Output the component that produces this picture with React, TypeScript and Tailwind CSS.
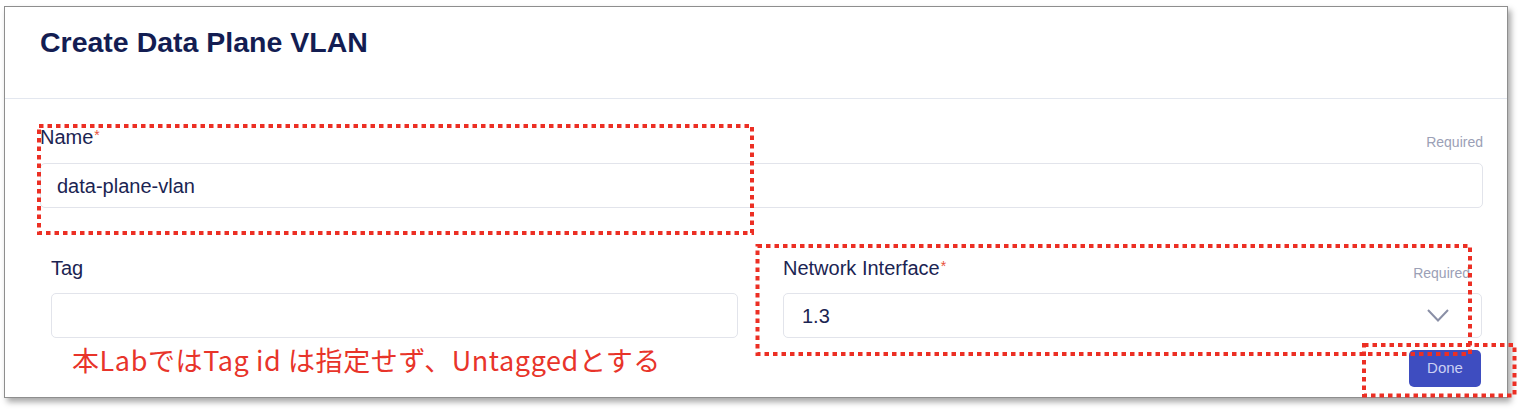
import React from "react";

const navy = "text-[#1b2452]";

function Required({ className = "" }: { className?: string }) {
  return (
    <span className={`text-[14px] leading-[14px] text-[#9ba0b6] ${className}`}>Required</span>
  );
}

export default function App() {
  return (
    <div
      className="relative w-[1522px] h-[412px] bg-white overflow-hidden"
      style={{ fontFamily: '"Liberation Sans", Arial, sans-serif' }}
    >
      <div className="ml-[4px] mt-[6px] w-[1504px] h-[392px] border border-[#8e8e8e] bg-white shadow-[3px_4px_6px_rgba(0,0,0,0.35)] flex flex-col">
        {/* header */}
        <div className="h-[92px] border-b border-[#e3e7ef] pl-[35px] pt-[21px]">
          <h1 className="text-[28.5px] leading-[28px] font-bold text-[#131d52]">Create Data Plane VLAN</h1>
        </div>

        {/* body */}
        <div className="flex flex-col pl-[35px] pr-[24px] pt-[28px]">
          <div className="flex justify-between h-[22px]">
            <label className={`text-[20px] leading-[20px] ${navy}`}>
              Name<span className="text-[#e8503a] text-[14px] align-top relative -top-[2px] ml-[1px]">*</span>
            </label>
            <Required className="mt-[8px]" />
          </div>
          <div className={`mt-[14px] h-[45px] rounded-[5px] border border-[#e2e4eb] pl-[16px] flex items-center text-[20px] ${navy}`}>
            data-plane-vlan
          </div>

          <div className="flex ml-[11px] mt-[50px] gap-[45px]">
            <div className="w-[687px] flex flex-col">
              <div className="h-[22px]">
                <label className={`text-[20px] leading-[20px] ${navy}`}>Tag</label>
              </div>
              <div className="mt-[13px] h-[45px] rounded-[5px] border border-[#e2e4eb]" />
            </div>
            <div className="w-[699px] flex flex-col">
              <div className="flex justify-between h-[22px]">
                <label className={`text-[20px] leading-[20px] ${navy}`}>
                  Network Interface<span className="text-[#e8503a] text-[14px] align-top relative -top-[2px] ml-[1px]">*</span>
                </label>
                <Required className="mt-[8px] mr-[12px]" />
              </div>
              <div className={`mt-[13px] h-[45px] rounded-[5px] border border-[#e2e4eb] pl-[18px] pr-[32px] flex items-center justify-between text-[20px] ${navy}`}>
                <span>1.3</span>
                <svg width="22" height="13" viewBox="0 0 22 13" fill="none">
                  <polyline points="1,1 11,11.5 21,1" stroke="#8a8fa6" strokeWidth="2" strokeLinejoin="miter" />
                </svg>
              </div>
            </div>
          </div>

          <div className="flex justify-end mt-[12px] pr-[2px]">
            <button className="w-[72px] h-[37px] rounded-[5px] bg-[#3e4dc0] text-[15px] text-[#cbd0f3]">Done</button>
          </div>
        </div>
      </div>

      {/* annotation text */}
      <div
        className="absolute left-[72px] top-[346px] text-[27px] leading-[27px] text-[#e8342a] whitespace-nowrap tracking-[0.6px]"
        style={{ fontFamily: '"Noto Sans CJK JP", "Noto Sans", sans-serif' }}
      >
        本LabではTag id は指定せず、Untaggedとする
      </div>

      {/* annotation boxes */}
      <svg className="absolute left-0 top-0 pointer-events-none" width="1522" height="412" viewBox="0 0 1522 412" fill="none">
        <g stroke="#ec2f24" strokeWidth="4" strokeDasharray="4.5 4">
          <rect x="39" y="126" width="713" height="107" />
          <rect x="757.5" y="246" width="712.5" height="108" />
          <rect x="1364" y="345" width="150.5" height="50.5" />
        </g>
      </svg>
    </div>
  );
}
